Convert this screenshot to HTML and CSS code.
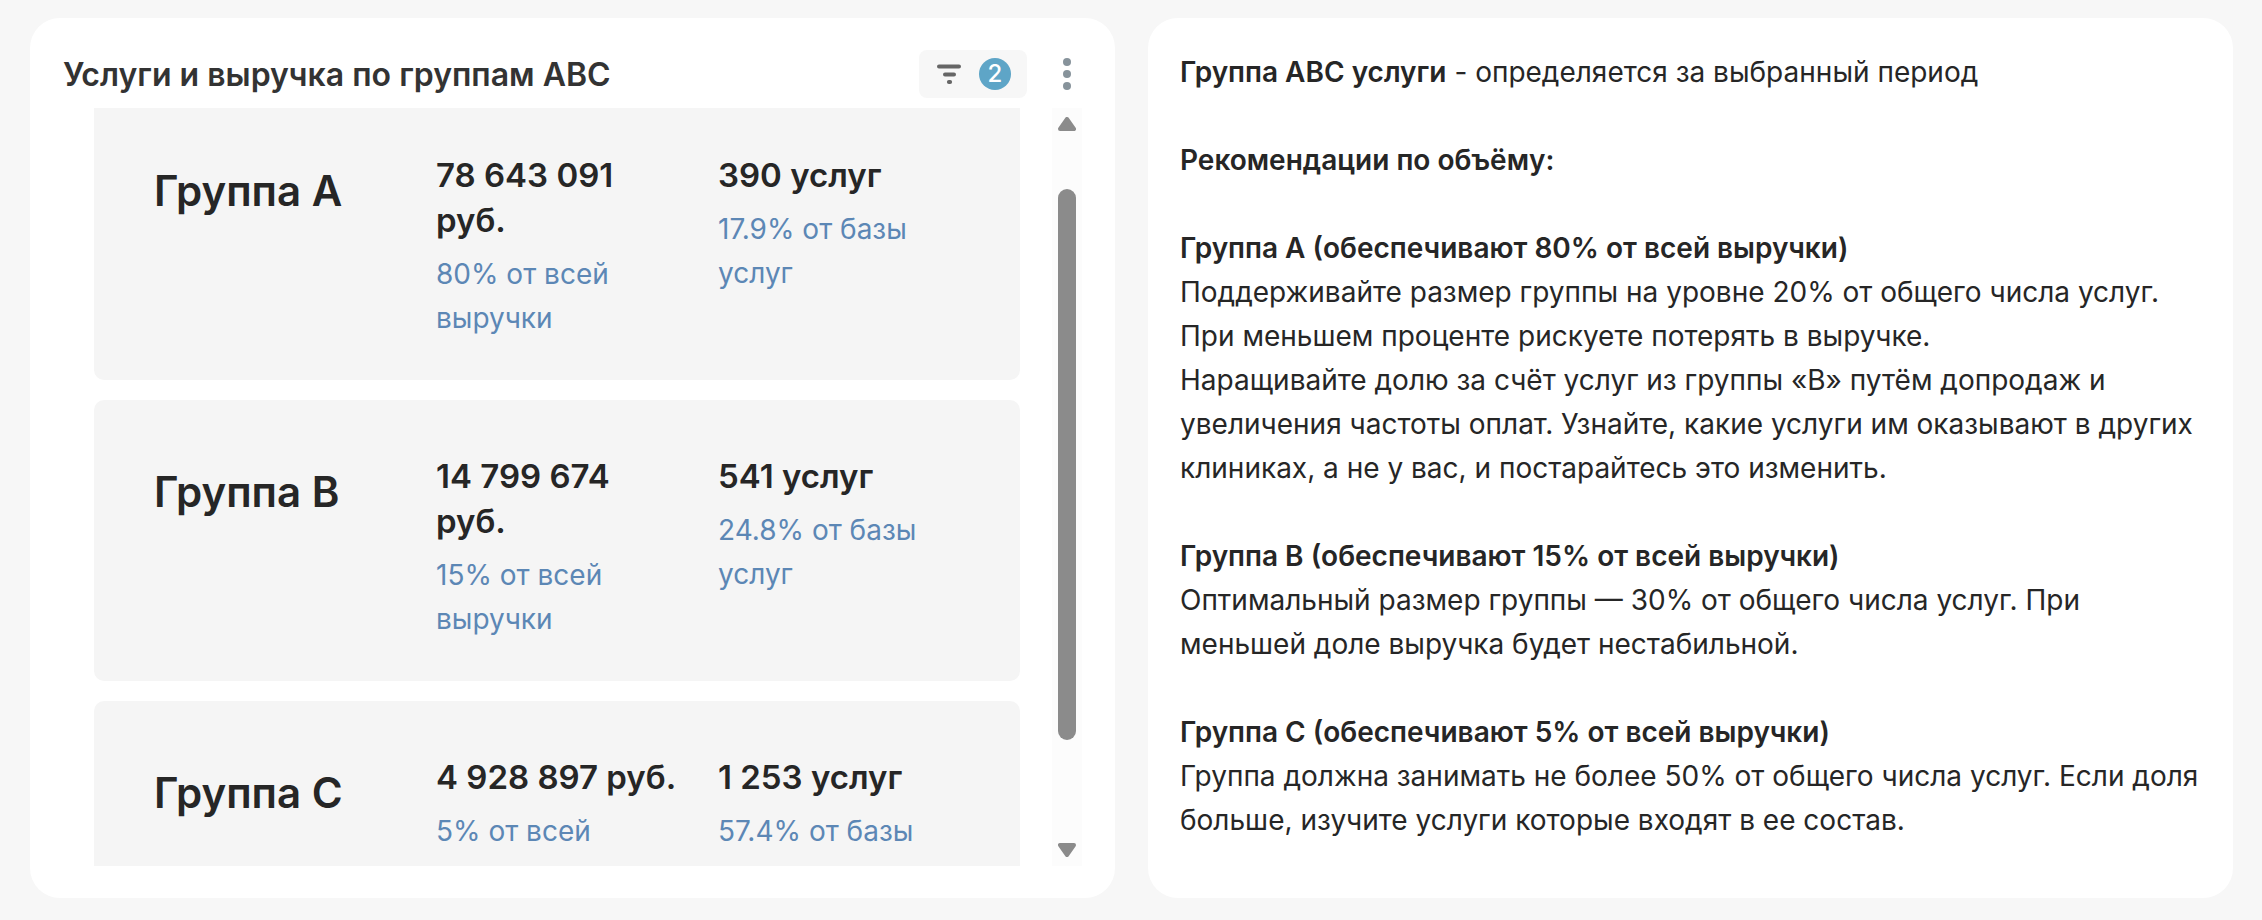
FILE: index.html
```html
<!DOCTYPE html>
<html lang="ru">
<head>
<meta charset="utf-8">
<meta name="viewport" content="width=device-width, initial-scale=1">
<title>Услуги и выручка по группам ABC</title>
<link rel="stylesheet" href="styles.css">
</head>
<body>
<main class="dashboard">
  <section class="panel revenue">
    <header class="panel-header">
      <h1 class="panel-title">Услуги и выручка по группам ABC</h1>
      <button class="filter-button" type="button" aria-label="Фильтры: 2">
        <svg class="filter-icon" viewBox="0 0 26 22" aria-hidden="true">
          <path d="M3 3.5H23M9 11.5H18M12.9 19H14.1"/>
        </svg>
        <span class="badge">2</span>
      </button>
      <button class="menu-button" type="button" aria-label="Меню">
        <svg class="menu-icon" viewBox="0 0 8 32" aria-hidden="true">
          <circle cx="4" cy="4" r="4"/><circle cx="4" cy="16" r="4"/><circle cx="4" cy="28" r="4"/>
        </svg>
      </button>
    </header>
    <div class="scroll-area">
      <div class="viewport">
        <div class="group-list">
          <article class="group">
            <h2 class="group-name">Группа A</h2>
            <div class="metric"><p class="value">78 643 091 руб.</p><p class="share">80% от всей выручки</p></div>
            <div class="metric"><p class="value">390 услуг</p><p class="share">17.9% от базы услуг</p></div>
          </article>
          <article class="group">
            <h2 class="group-name">Группа B</h2>
            <div class="metric"><p class="value">14 799 674 руб.</p><p class="share">15% от всей выручки</p></div>
            <div class="metric"><p class="value">541 услуг</p><p class="share">24.8% от базы услуг</p></div>
          </article>
          <article class="group">
            <h2 class="group-name">Группа C</h2>
            <div class="metric"><p class="value">4 928 897 руб.</p><p class="share">5% от всей</p></div>
            <div class="metric"><p class="value">1 253 услуг</p><p class="share">57.4% от базы</p></div>
          </article>
        </div>
      </div>
      <div class="scrollbar" aria-hidden="true">
        <svg class="arrow" viewBox="0 0 18 14"><path d="M9 2L16 12H2Z"/></svg>
        <div class="track"><div class="thumb"></div></div>
        <svg class="arrow" viewBox="0 0 18 14"><path d="M9 12L2 2H16Z"/></svg>
      </div>
    </div>
  </section>
  <section class="panel notes">
    <p class="note"><strong>Группа ABC услуги</strong> - определяется за выбранный период</p>
    <p class="note"><strong>Рекомендации по объёму:</strong></p>
    <p class="note"><strong>Группа A (обеспечивают 80% от всей выручки)</strong><br>
      Поддерживайте размер группы на уровне 20% от общего числа услуг. При меньшем проценте рискуете потерять в выручке.<br>
      Наращивайте долю за счёт услуг из группы «B» путём допродаж и увеличения частоты оплат. Узнайте, какие услуги им оказывают в других клиниках, а не у вас, и постарайтесь это изменить.</p>
    <p class="note"><strong>Группа B (обеспечивают 15% от всей выручки)</strong><br>
      Оптимальный размер группы — 30% от общего числа услуг. При меньшей доле выручка будет нестабильной.</p>
    <p class="note"><strong>Группа C (обеспечивают 5% от всей выручки)</strong><br>
      Группа должна занимать не более 50% от общего числа услуг. Если доля больше, изучите услуги которые входят в ее состав.</p>
  </section>
</main>
</body>
</html>
```
FILE: styles.css
```css
* {
  box-sizing: border-box;
}

body,
h1,
h2,
p {
  margin: 0;
}

body {
  background: #f7f7f7;
  color: #262626;
  font-family: Inter, "Liberation Sans", sans-serif;
  font-size: 28px;
  line-height: 44px;
}

button {
  border: 0;
  padding: 0;
  font: inherit;
  cursor: pointer;
}

.dashboard {
  display: grid;
  grid-template-columns: 1fr 1fr;
  gap: 33px;
  height: 100vh;
  padding: 18px 29px 22px 30px;
}

.panel {
  min-width: 0;
  min-height: 0;
  background: #fff;
  border-radius: 30px;
}

.revenue {
  display: flex;
  flex-direction: column;
  padding: 32px 33px;
}

.panel-header {
  display: flex;
  align-items: center;
  height: 48px;
  margin-bottom: 10px;
}

.panel-title {
  flex: 1;
  padding-top: 2px;
  color: #333;
  font-size: 32px;
  font-weight: 600;
}

.filter-button {
  display: flex;
  align-items: center;
  justify-content: space-between;
  width: 108px;
  height: 48px;
  padding: 0 16px;
  border-radius: 8px;
  background: #f7f7f7;
}

.filter-icon {
  width: 28px;
  height: 22px;
  fill: none;
  stroke: #666;
  stroke-width: 4;
  stroke-linecap: round;
}

.badge {
  width: 32px;
  height: 32px;
  border-radius: 50%;
  background: #5ea5c7;
  color: #fff;
  font-size: 24px;
  font-weight: 500;
  line-height: 32px;
  text-align: center;
}

.menu-button {
  display: flex;
  justify-content: center;
  width: 30px;
  margin-left: 25px;
  background: none;
}

.menu-icon {
  width: 8px;
  height: 32px;
  fill: #87939b;
}

.scroll-area {
  display: flex;
  flex: 1;
  gap: 32px;
  min-height: 0;
  padding-left: 31px;
}

.viewport {
  flex: 1;
  overflow: hidden;
}

.group-list {
  display: grid;
  grid-auto-rows: 1fr;
  gap: 20px;
  margin-top: -9px;
}

.group {
  display: grid;
  grid-template-columns: repeat(3, 1fr);
  padding: 54px 40px 40px;
  border-radius: 10px;
  background: #f5f5f5;
}

.group-name,
.metric {
  padding: 0 20px;
}

.group-name {
  padding-top: 8px;
  font-size: 42px;
  font-weight: 600;
  line-height: 60px;
}

.value {
  margin-bottom: 9px;
  font-size: 33px;
  font-weight: 600;
  line-height: 45px;
}

.share {
  color: #5c87b5;
}

.scrollbar {
  display: flex;
  flex-direction: column;
  align-items: center;
  gap: 6px;
  width: 30px;
  padding: 9px 0;
  background: #fcfcfc;
}

.arrow {
  width: 18px;
  height: 14px;
  fill: #8b8b8b;
  stroke: #8b8b8b;
  stroke-width: 4;
  stroke-linejoin: round;
}

.track {
  flex: 1;
  width: 18px;
  padding-top: 52px;
}

.thumb {
  height: 85%;
  border-radius: 9px;
  background: #8b8b8b;
}

.notes {
  display: flex;
  flex-direction: column;
  gap: 44px;
  padding: 32px;
}

.note strong {
  font-weight: 600;
}
```
